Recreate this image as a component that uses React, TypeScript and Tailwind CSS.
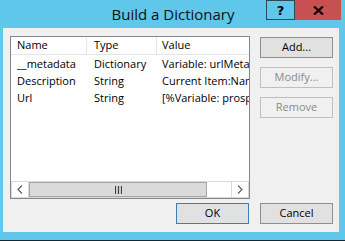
import React from "react";

const rows = [
  { name: "__metadata", type: "Dictionary", value: "Variable: urlMetadata" },
  { name: "Description", type: "String", value: "Current Item:Name" },
  { name: "Url", type: "String", value: "[%Variable: prospectUrl%]" },
];

const font = { fontFamily: '"Open Sans", "Liberation Sans", sans-serif' };

export default function App() {
  return (
    <div
      className="w-[345px] h-[241px] bg-[#5fc7ea] flex flex-col overflow-hidden text-[11px] text-black"
      style={font}
    >
      {/* Title bar */}
      <div className="relative h-[28px] shrink-0 flex items-center justify-center">
        <span className="text-[15px] leading-none text-[#111] mt-[1px] ml-[1px]">Build a Dictionary</span>
        <div className="absolute top-0 right-[4px] flex h-[20px]">
          <div className="w-[29px] h-[20px] border border-[#2b4a5a] flex items-center justify-center">
            <span className="font-bold text-[13px] leading-none" style={{ fontFamily: '"DejaVu Sans", sans-serif' }}>?</span>
          </div>
          <div className="w-[46px] h-[20px] bg-[#c75050] flex items-center justify-center">
            <svg width="11" height="9" viewBox="0 0 11 9">
              <path d="M1 0.5 L10 8.5 M10 0.5 L1 8.5" stroke="#000" strokeWidth="2.2" />
            </svg>
          </div>
        </div>
      </div>

      {/* Client area */}
      <div className="ml-[3px] w-[336px] h-[204px] bg-[#f0f0f0] flex flex-col pl-[7px] pt-[8px]">
        <div className="flex">
          {/* List */}
          <div className="w-[240px] h-[163px] border border-[#828790] bg-white flex flex-col">
            <div className="flex h-[18px] border-b border-[#e5e5e5] items-center">
              <div className="w-[76px] h-full border-r border-[#e5e5e5] pl-[6px] flex items-center">Name</div>
              <div className="w-[70px] h-full border-r border-[#e5e5e5] pl-[7px] flex items-center">Type</div>
              <div className="flex-1 h-full pl-[5px] flex items-center overflow-hidden whitespace-nowrap">Value</div>
            </div>
            <div className="flex-1 flex flex-col pt-[1px]">
              {rows.map((r) => (
                <div key={r.name} className="flex h-[17px] items-center whitespace-nowrap">
                  <div className="w-[76px] pl-[6px] overflow-hidden">{r.name}</div>
                  <div className="w-[70px] pl-[7px] overflow-hidden">{r.type}</div>
                  <div className="w-[92px] pl-[5px] overflow-hidden">{r.value}</div>
                </div>
              ))}
            </div>
            {/* Horizontal scrollbar */}
            <div className="h-[17px] flex border border-[#d9d9d9] bg-white">
              <div className="w-[17px] h-full flex items-center justify-center border-r border-[#d9d9d9]">
                <svg width="6" height="9" viewBox="0 0 6 9">
                  <path d="M5 0.5 L1 4.5 L5 8.5" fill="none" stroke="#606060" strokeWidth="1.2" />
                </svg>
              </div>
              <div className="w-[178px] h-full bg-[#dadada] border border-[#a6a6a6] flex items-center justify-center">
                <svg width="7" height="8" viewBox="0 0 7 8">
                  <path d="M0.5 0 V8 M3.5 0 V8 M6.5 0 V8" stroke="#404040" strokeWidth="1.2" />
                </svg>
              </div>
              <div className="flex-1" />
              <div className="w-[17px] h-full flex items-center justify-center border-l border-[#d9d9d9]">
                <svg width="6" height="9" viewBox="0 0 6 9">
                  <path d="M1 0.5 L5 4.5 L1 8.5" fill="none" stroke="#606060" strokeWidth="1.2" />
                </svg>
              </div>
            </div>
          </div>

          {/* Side buttons */}
          <div className="ml-[10px] flex flex-col gap-[9px] pt-[1px]">
            <button className="w-[73px] h-[21px] bg-[#e1e1e1] border border-[#8f8f8f] flex items-center justify-center">
              Add...
            </button>
            <button className="w-[73px] h-[21px] bg-[#f0f0f0] border border-[#bfbfbf] text-[#8a8a8a] flex items-center justify-center">
              Modify...
            </button>
            <button className="w-[73px] h-[21px] bg-[#f0f0f0] border border-[#bfbfbf] text-[#8a8a8a] flex items-center justify-center">
              Remove
            </button>
          </div>
        </div>

        {/* Bottom buttons */}
        <div className="flex mt-[4px] pl-[166px] gap-[11px]">
          <button className="w-[73px] h-[21px] bg-[#e1e1e1] border border-[#3c7fb1] flex items-center justify-center">
            OK
          </button>
          <button className="w-[73px] h-[21px] bg-[#e1e1e1] border border-[#8f8f8f] flex items-center justify-center">
            Cancel
          </button>
        </div>
      </div>

      <div className="flex-1" />
      <div className="h-[1px] bg-[#1b2530]" />
    </div>
  );
}
